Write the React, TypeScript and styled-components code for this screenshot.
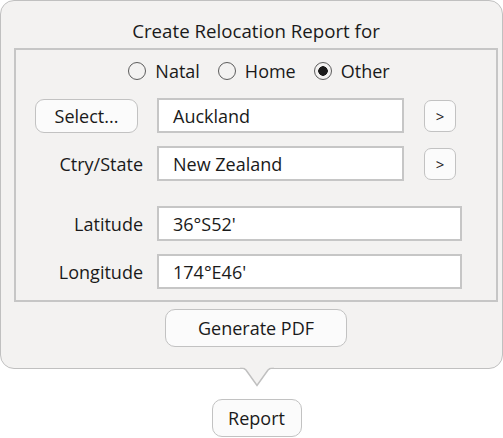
import { createGlobalStyle } from "styled-components";
import styled from "styled-components";

const GlobalStyle = createGlobalStyle`
	html, body {
		margin: 0;
		padding: 0;
		background: #ffffff;
	}
	body {
		font-family: "Open Sans", "Noto Sans", sans-serif;
		color: #1a1a1a;
	}
`

const fields = [
	{ label: "Latitude", value: "36°S52'" },
	{ label: "Longitude", value: "174°E46'" },
]

export default function App() {
	return (
		<Page>
			<GlobalStyle />
			<Popover>
				<Inner>
					<Title>Create Relocation Report for</Title>
					<GroupBox>
						<RadioRow>
							<RadioOption><RadioDot /> Natal</RadioOption>
							<RadioOption><RadioDot /> Home</RadioOption>
							<RadioOption><RadioDot $checked /> Other</RadioOption>
						</RadioRow>
						<Row>
							<LabelCell><SelectButton>Select...</SelectButton></LabelCell>
							<Field>Auckland</Field>
							<ArrowButton>&gt;</ArrowButton>
						</Row>
						<Row $top={13}>
							<LabelCell>Ctry/State</LabelCell>
							<Field>New Zealand</Field>
							<ArrowButton>&gt;</ArrowButton>
						</Row>
						{fields.map((f, i) => (
							<Row key={f.label} $top={i === 0 ? 25 : 13}>
								<LabelCell>{f.label}</LabelCell>
								<Field $wide>{f.value}</Field>
							</Row>
						))}
					</GroupBox>
					<GenerateButton>Generate PDF</GenerateButton>
				</Inner>
				<Arrow width="34" height="22" viewBox="0 0 34 22">
					<path d="M0 2 L2 2 Q4 2 6 4 L17 19.5 L28 4 Q30 2 32 2 L34 2" fill="#f3f2f1" stroke="#c0c0c0" strokeWidth="1.5" />
					<rect x="0" y="0" width="34" height="1.6" fill="#f3f2f1" />
				</Arrow>
			</Popover>
			<ReportRow>
				<ReportButton>Report</ReportButton>
			</ReportRow>
		</Page>
	)
}

const Page = styled.div`
	width: 503px;
	height: 438px;
	overflow: hidden;
	font-size: 18px;
`
const Popover = styled.div`
	position: relative;
	box-sizing: border-box;
	width: 503px;
	height: 369px;
	background: #f3f2f1;
	border: 1.5px solid #c0c0c0;
	border-radius: 14px;
`
const Inner = styled.div`
	display: flex;
	flex-direction: column;
	align-items: center;
	margin: 0 4px 0 13px;
`
const Title = styled.div`
	margin-top: 17px;
	height: 26px;
	line-height: 26px;
	font-size: 18.7px;
`
const GroupBox = styled.div`
	align-self: stretch;
	margin-top: 4px;
	padding: 9px 0 11px;
	border: 2px solid #c6c6c6;
`
const RadioRow = styled.div`
	display: flex;
	justify-content: center;
	gap: 18px;
	height: 24px;
	padding-left: 6px;
`
const RadioOption = styled.label`
	display: flex;
	align-items: center;
	gap: 9px;
`
const RadioDot = styled.span<{ $checked?: boolean }>`
	box-sizing: border-box;
	width: 18px;
	height: 18px;
	border-radius: 50%;
	border: 1.6px solid #5c5c5c;
	background: ${p => p.$checked ? "radial-gradient(circle, #1a1a1a 0 4.5px, transparent 5px)" : "transparent"};
`
const Row = styled.div<{ $top?: number }>`
	display: flex;
	align-items: center;
	height: 35px;
	margin-top: ${p => p.$top ?? 15}px;
`
const LabelCell = styled.div`
	display: flex;
	justify-content: flex-end;
	width: 127px;
	margin-right: 14px;
`
const Field = styled.div<{ $wide?: boolean }>`
	box-sizing: border-box;
	display: flex;
	align-items: center;
	width: ${p => p.$wide ? 305 : 247}px;
	height: 35px;
	padding-left: 14px;
	background: #ffffff;
	border: 2px solid #c6c6c6;
`
const BaseButton = styled.button`
	box-sizing: border-box;
	display: flex;
	align-items: center;
	justify-content: center;
	padding: 0;
	font-family: inherit;
	font-size: 18px;
	color: #1a1a1a;
	background: #fbfbfb;
	border: 1.5px solid #c2c2c2;
`
const SelectButton = styled(BaseButton)`
	width: 103px;
	height: 34px;
	margin-right: 5px;
	border-radius: 9px;
`
const ArrowButton = styled(BaseButton)`
	width: 32px;
	height: 32px;
	margin-left: 20px;
	border-radius: 7px;
	font-size: 15px;
`
const GenerateButton = styled(BaseButton)`
	width: 182px;
	height: 38px;
	margin-top: 7px;
	border-radius: 10px;
`
const Arrow = styled.svg`
	position: absolute;
	left: 239px;
	top: 365px;
`
const ReportRow = styled.div`
	display: flex;
	justify-content: center;
	padding-left: 10px;
	margin-top: 30px;
`
const ReportButton = styled(BaseButton)`
	width: 90px;
	height: 38px;
	border-radius: 10px;
`
